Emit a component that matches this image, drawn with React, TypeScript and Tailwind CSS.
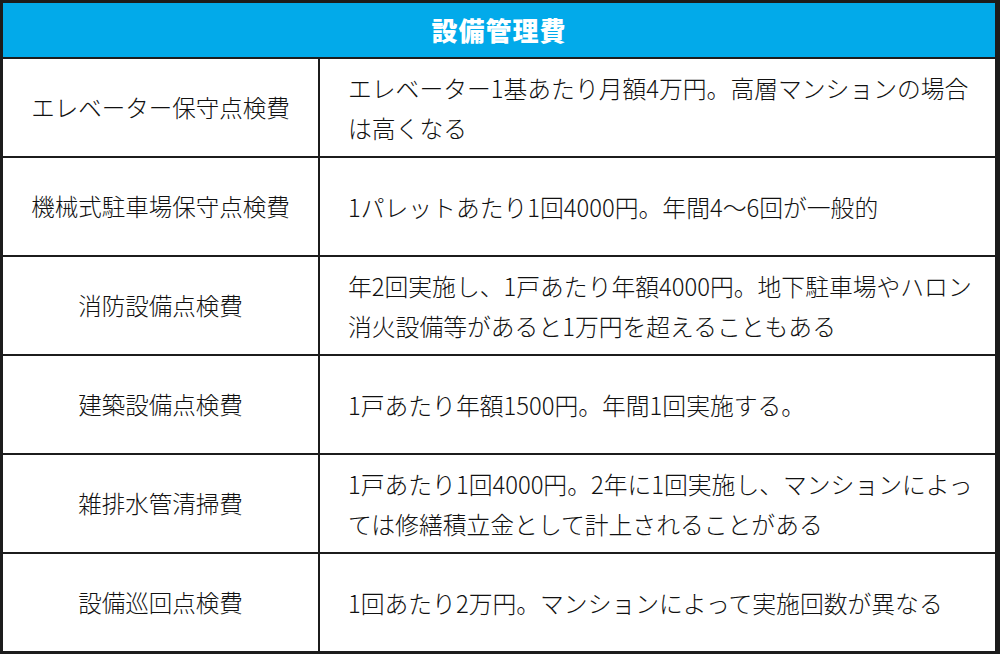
import React from "react";

const rows: { label: string; lines: string[] }[] = [
  { label: "エレベーター保守点検費", lines: ["エレベーター1基あたり月額4万円。高層マンションの場合", "は高くなる"] },
  { label: "機械式駐車場保守点検費", lines: ["1パレットあたり1回4000円。年間4～6回が一般的"] },
  { label: "消防設備点検費", lines: ["年2回実施し、1戸あたり年額4000円。地下駐車場やハロン", "消火設備等があると1万円を超えることもある"] },
  { label: "建築設備点検費", lines: ["1戸あたり年額1500円。年間1回実施する。"] },
  { label: "雑排水管清掃費", lines: ["1戸あたり1回4000円。2年に1回実施し、マンションによっ", "ては修繕積立金として計上されることがある"] },
  { label: "設備巡回点検費", lines: ["1回あたり2万円。マンションによって実施回数が異なる"] },
];

export default function App() {
  return (
    <div
      className="w-[1000px] h-[654px] bg-white flex flex-col border-l-[3px] border-t-[3px] border-r-[5px] border-b-[3px] border-[#1c1c1c] text-[#111]"
      style={{ fontFamily: '"Noto Sans CJK JP", "Noto Sans", sans-serif' }}
    >
      <div className="h-[56px] shrink-0 bg-[#02aaea] border-b-2 border-[#1c1c1c] flex items-center justify-center">
        <span className="text-white text-[26px] font-black tracking-[1px] leading-none">設備管理費</span>
      </div>
      {rows.map((r, i) => (
        <div
          key={i}
          className={`flex-1 flex ${i < rows.length - 1 ? "border-b-2 border-[#1c1c1c]" : ""}`}
        >
          <div className="w-[317px] shrink-0 border-r-2 border-[#1c1c1c] flex items-center justify-center text-[23.5px] font-light">
            {r.label}
          </div>
          <div className="flex-1 flex flex-col justify-center pl-[28px] text-[23.8px] leading-[40px] whitespace-nowrap font-light">
            {r.lines.map((l, j) => (
              <div key={j}>{l}</div>
            ))}
          </div>
        </div>
      ))}
    </div>
  );
}
